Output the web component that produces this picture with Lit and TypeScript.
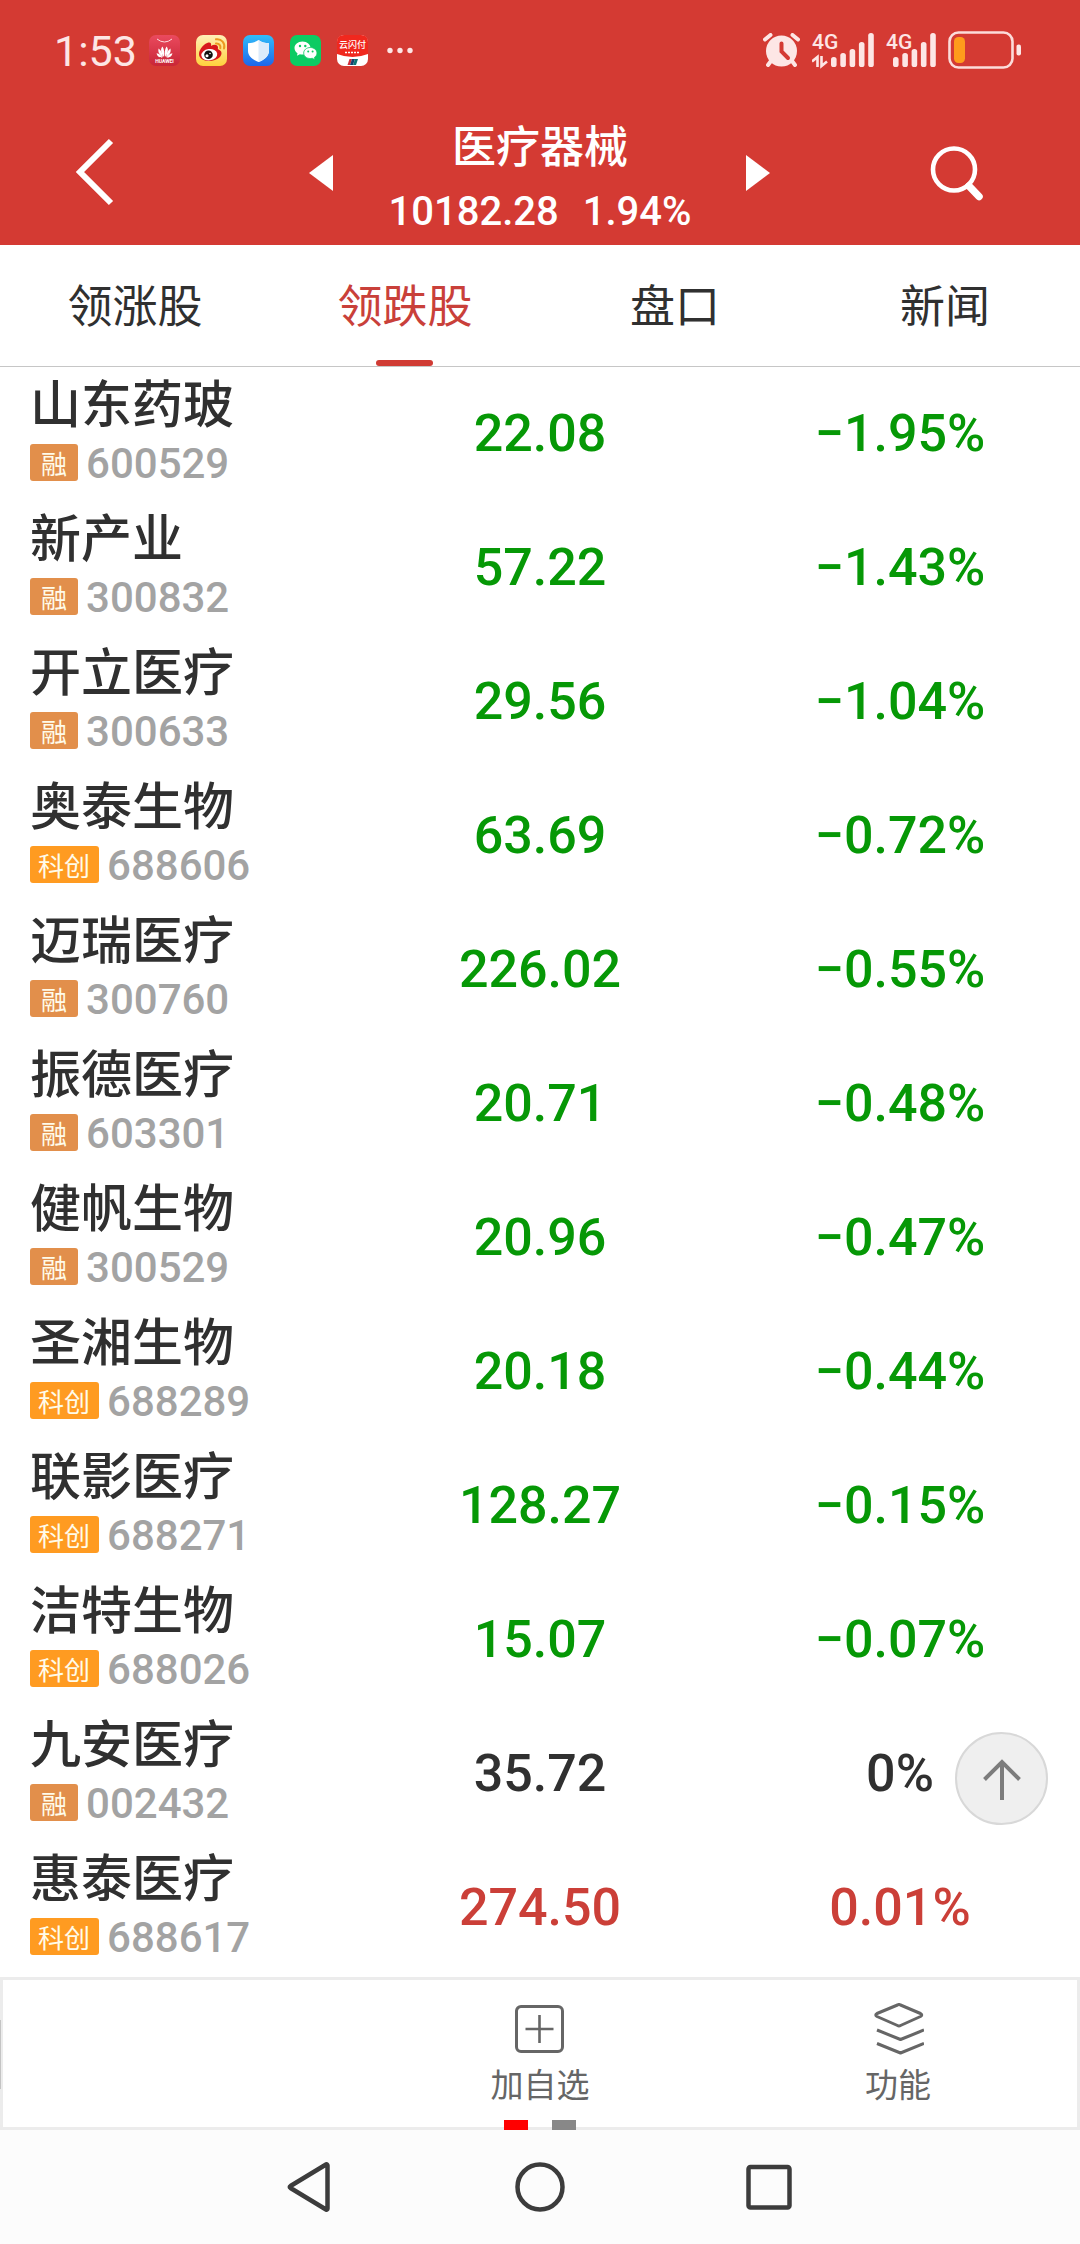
import { LitElement, html, css, svg } from "lit";
import { customElement, property, state } from "lit/decorators.js";
import { classMap } from "lit/directives/class-map.js";

interface Stock {
  name: string;
  board: string;
  code: string;
  price: string;
  change: string;
}

const MARGIN = "融";
const STAR = "科创";

const STOCKS: Stock[] = [
  { name: "山东药玻", board: MARGIN, code: "600529", price: "22.08", change: "-1.95%" },
  { name: "新产业", board: MARGIN, code: "300832", price: "57.22", change: "-1.43%" },
  { name: "开立医疗", board: MARGIN, code: "300633", price: "29.56", change: "-1.04%" },
  { name: "奥泰生物", board: STAR, code: "688606", price: "63.69", change: "-0.72%" },
  { name: "迈瑞医疗", board: MARGIN, code: "300760", price: "226.02", change: "-0.55%" },
  { name: "振德医疗", board: MARGIN, code: "603301", price: "20.71", change: "-0.48%" },
  { name: "健帆生物", board: MARGIN, code: "300529", price: "20.96", change: "-0.47%" },
  { name: "圣湘生物", board: STAR, code: "688289", price: "20.18", change: "-0.44%" },
  { name: "联影医疗", board: STAR, code: "688271", price: "128.27", change: "-0.15%" },
  { name: "洁特生物", board: STAR, code: "688026", price: "15.07", change: "-0.07%" },
  { name: "九安医疗", board: MARGIN, code: "002432", price: "35.72", change: "0%" },
  { name: "惠泰医疗", board: STAR, code: "688617", price: "274.50", change: "0.01%" },
];

const TABS = ["领涨股", "领跌股", "盘口", "新闻"];

const buttonReset = css`
  button {
    margin: 0;
    padding: 0;
    border: 0;
    background: none;
    color: inherit;
    font: inherit;
    cursor: pointer;
  }
  svg {
    display: block;
    flex: none;
  }
`;

@customElement("status-bar")
class StatusBar extends LitElement {
  static styles = css`
    :host {
      display: flex;
      justify-content: space-between;
      align-items: center;
      height: 100px;
      padding: 0 58px 0 54px;
      box-sizing: border-box;
      color: #fde6e5;
    }
    .group {
      display: flex;
      align-items: center;
    }
    .time {
      margin-right: 12px;
      padding-top: 2px;
      font-family: Roboto, sans-serif;
      font-size: 43px;
      line-height: 52px;
    }
    .apps {
      gap: 16px;
    }
    .system {
      gap: 12px;
    }
    svg {
      display: block;
      flex: none;
    }
    .network {
      font: 500 21px Roboto, sans-serif;
    }
    .brand {
      font: 700 5px Roboto, sans-serif;
    }
    .pay {
      font: 500 9px "Noto Sans CJK SC", sans-serif;
    }
  `;

  private bars(x: number) {
    const tops = [24, 20, 16, 9, 0];
    return tops.map(
      (top, i) => svg`<rect x=${x + i * 9.3} y=${top} width="5.6" height=${34 - top} rx="2.6" fill="currentColor"/>`,
    );
  }

  render() {
    return html`
      <div class="group">
        <span class="time">1:53</span>
        <div class="group apps">
          <svg width="31" height="31" viewBox="0 0 31 31" aria-hidden="true">
            <defs>
              <linearGradient id="mall" x2="0" y2="1"><stop stop-color="#ea4a5e" /><stop offset="1" stop-color="#c92637" /></linearGradient>
            </defs>
            <rect width="31" height="31" rx="7" fill="url(#mall)" />
            <path d="M8 4q7.500 6 15 0" fill="none" stroke="#ffd9dc" stroke-width="1" />
            <g fill="#fff">
              <path d="M15 22C12 18 11 14 13.500 11.500C15.300 14 15.500 18 15 22ZM16 22C19 18 20 14 17.500 11.500C15.700 14 15.500 18 16 22Z" />
              <path d="M14 22C10.500 20 8.600 17 9.600 13.500C12.400 15.500 13.600 18.500 14 22ZM17 22C20.500 20 22.400 17 21.400 13.500C18.600 15.500 17.400 18.500 17 22Z" />
              <path d="M13.500 22.700C10.500 22.700 8 21.500 7.600 18.300C10.300 18.600 12.300 20.300 13.500 22.700ZM17.500 22.700C20.500 22.700 23 21.500 23.400 18.300C20.700 18.600 18.700 20.300 17.500 22.700Z" />
            </g>
            <text class="brand" x="15.500" y="28" text-anchor="middle" fill="#fff">HUAWEI</text>
          </svg>
          <svg width="31" height="31" viewBox="0 0 31 31" aria-hidden="true">
            <defs>
              <linearGradient id="blog" x2="0" y2="1"><stop stop-color="#fff0b8" /><stop offset="1" stop-color="#ffd23c" /></linearGradient>
            </defs>
            <rect width="31" height="31" rx="7" fill="url(#blog)" />
            <path d="M3 19C3 14 9 8 12.500 7.500C15 7.200 15.500 9 15 11C18 9 22 9.500 22 12.500C22 13.500 21.500 14 22.500 14.500C26.500 16 26 19.500 24 22C18 28 3 27.500 3 19Z" fill="#d8181c" />
            <ellipse cx="13.300" cy="19.700" rx="8" ry="5.700" fill="#fff" transform="rotate(-8 13.300 19.700)" />
            <circle cx="12.500" cy="19.800" r="4.300" fill="#111" />
            <circle cx="11" cy="20.700" r="1.500" fill="#fff" />
            <circle cx="14" cy="18.500" r=".8" fill="#fff" />
            <path d="M20 8.500C23 8.200 25 10.500 24.300 13.300M20 4.300C25.500 3.500 29.500 8 28 13.500" fill="none" stroke="#ec9a20" stroke-width="2" stroke-linecap="round" />
          </svg>
          <svg width="31" height="31" viewBox="0 0 31 31" aria-hidden="true">
            <defs>
              <linearGradient id="guard" x2="0" y2="1"><stop stop-color="#31bdf9" /><stop offset="1" stop-color="#1f66ea" /></linearGradient>
            </defs>
            <rect width="31" height="31" rx="7" fill="url(#guard)" />
            <path d="M15.500 5C18.500 7.300 22 8 26 8.300V16C26 21 21 25 15.500 27C10 25 5 21 5 16V8.300C9 8 12.500 7.300 15.500 5Z" fill="#fff" />
            <path d="M15.500 5C18.500 7.300 22 8 26 8.300V16C26 21 21 25 15.500 27Z" fill="#dcebfb" />
          </svg>
          <svg width="31" height="31" viewBox="0 0 31 31" aria-hidden="true">
            <rect width="31" height="31" rx="7" fill="#0ccb63" />
            <path d="M12.500 6.500C7.800 6.500 4.500 9.500 4.500 13C4.500 15.200 5.700 17 7.500 18.200L7 20.800L9.900 19.300C15 20.500 20.500 17.500 20.500 13C20.500 9.500 17.200 6.500 12.500 6.500Z" fill="#fff" />
            <path d="M20.300 12.500C16.500 12.500 13.700 15 13.700 18C13.700 22 18 24.300 22.300 23.300L25 24.700L24.400 22.400C26 21.400 27 19.800 27 18C27 15 24.100 12.500 20.300 12.500Z" fill="#fff" stroke="#0ccb63" stroke-width=".8" />
            <g fill="#0ccb63"><circle cx="10" cy="11" r="1.200" /><circle cx="15.300" cy="11" r="1.200" /><circle cx="18.200" cy="16.500" r="1" /><circle cx="22.600" cy="16.500" r="1" /></g>
          </svg>
          <svg width="31" height="31" viewBox="0 0 31 31" aria-hidden="true">
            <rect width="31" height="31" rx="7" fill="#fff" />
            <path d="M0 19V7Q0 0 7 0H24Q31 0 31 7V19Q15.500 25 0 19Z" fill="#f0281e" />
            <text class="pay" x="15.500" y="13" text-anchor="middle" fill="#fff">云闪付</text>
            <path d="M8 17.500H23" stroke="#fff" stroke-width="1.500" stroke-dasharray="2 1" />
            <path d="M12.500 24H15L13 30H10.500Z" fill="#d22f3a" />
            <path d="M15 24H18L16 30H13Z" fill="#17406e" />
            <path d="M18 24H21L19 30H16Z" fill="#0d7374" />
          </svg>
          <svg width="31" height="31" viewBox="0 0 31 31" aria-hidden="true" fill="currentColor">
            <circle cx="6" cy="15.500" r="2.700" /><circle cx="16" cy="15.500" r="2.700" /><circle cx="26" cy="15.500" r="2.700" />
          </svg>
        </div>
      </div>
      <div class="group system">
        <svg width="37" height="34" viewBox="0 0 37 34" aria-hidden="true">
          <circle cx="18.500" cy="18" r="15.500" fill="currentColor" />
          <path d="M2 6.500L7.500 2M35 6.500L29.500 2" stroke="currentColor" stroke-width="4" stroke-linecap="round" />
          <path d="M8 28L5 32M29 28L32 32" stroke="currentColor" stroke-width="4" stroke-linecap="round" />
          <path d="M18.500 10.500V18.500L25 25" fill="none" stroke="#d43a33" stroke-width="4" stroke-linecap="round" />
        </svg>
        <svg width="62" height="46" viewBox="0 -6 62 46" aria-hidden="true">
          <text class="network" x="0" y="16" fill="currentColor">4G</text>
          <path d="M5.500 34V24L0 28.500M9.500 23V33L15 28.500" fill="none" stroke="currentColor" stroke-width="2.600" />
          ${this.bars(19)}
        </svg>
        <svg width="50" height="46" viewBox="0 -6 50 46" aria-hidden="true">
          <text class="network" x="0" y="16" fill="currentColor">4G</text>
          ${this.bars(7)}
        </svg>
        <svg width="74" height="38" viewBox="0 0 74 38" aria-hidden="true">
          <rect x="1.500" y="1.500" width="63" height="35" rx="9" fill="none" stroke="#fcdcda" stroke-width="2.600" />
          <rect x="6" y="6" width="11" height="26" rx="4.500" fill="#ff9b1c" />
          <rect x="68.500" y="13.500" width="4.500" height="11" rx="2" fill="currentColor" />
        </svg>
      </div>
    `;
  }
}

@customElement("board-header")
class BoardHeader extends LitElement {
  static styles = [
    buttonReset,
    css`
      :host {
        display: grid;
        grid-template-columns: 1fr 45% 1fr;
        align-items: center;
        padding: 12px 0 3px;
        color: #fff;
      }
      button {
        margin-bottom: 8px;
      }
      .back {
        justify-self: start;
        margin-left: 62px;
      }
      .search {
        justify-self: end;
        margin-right: 91px;
      }
      .switcher {
        display: flex;
        align-items: center;
        justify-content: space-between;
      }
      .heading {
        text-align: center;
      }
      .title {
        margin: 0;
        font-size: 44px;
        font-weight: 500;
        line-height: 64px;
      }
      .quote {
        display: flex;
        gap: 24px;
        justify-content: center;
        padding-top: 6px;
        font-family: Roboto, sans-serif;
        font-size: 40px;
        font-weight: 500;
        line-height: 60px;
      }
    `,
  ];

  render() {
    return html`
      <button class="back" aria-label="返回">
        <svg width="64" height="72" viewBox="0 0 64 72" fill="none" stroke="#fff" stroke-width="6">
          <path d="M49 4L18 35L49 66" />
        </svg>
      </button>
      <div class="switcher">
        <button aria-label="上一个">
          <svg width="48" height="64" viewBox="0 0 48 64"><path d="M12 32L36 14V50Z" fill="#fff" /></svg>
        </button>
        <div class="heading">
          <h1 class="title">医疗器械</h1>
          <div class="quote"><span>10182.28</span><span>1.94%</span></div>
        </div>
        <button aria-label="下一个">
          <svg width="48" height="64" viewBox="0 0 48 64"><path d="M35 32L11 14V50Z" fill="#fff" /></svg>
        </button>
      </div>
      <button class="search" aria-label="搜索">
        <svg width="64" height="64" viewBox="0 0 64 64" fill="none" stroke="#fff">
          <circle cx="29" cy="28.500" r="21" stroke-width="4.600" />
          <path d="M44 45L54 55.500" stroke-width="7.500" stroke-linecap="round" />
        </svg>
      </button>
    `;
  }
}

@customElement("board-tabs")
class BoardTabs extends LitElement {
  @state() private active = 1;

  static styles = [
    buttonReset,
    css`
      :host {
        display: grid;
        grid-template-columns: repeat(4, 1fr);
        border-bottom: 1px solid #c6c6c6;
        background: #fff;
      }
      button.tab {
        position: relative;
        padding: 29px 0 32px;
        font-size: 45px;
        line-height: 60px;
        color: #303030;
      }
      button.active {
        color: #c9403a;
      }
      .active::after {
        content: "";
        position: absolute;
        left: 50%;
        bottom: 0;
        width: 57px;
        height: 6px;
        margin-left: -29px;
        border-radius: 3px;
        background: #d03b34;
      }
    `,
  ];

  render() {
    return TABS.map(
      (label, i) => html`
        <button
          class=${classMap({ tab: true, active: i === this.active })}
          aria-pressed=${i === this.active}
          @click=${() => (this.active = i)}
        >${label}</button>
      `,
    );
  }
}

@customElement("stock-list")
class StockList extends LitElement {
  @property({ attribute: false }) stocks: Stock[] = [];

  static styles = css`
    :host {
      display: block;
    }
    .stocks {
      width: 100%;
      table-layout: fixed;
      border-collapse: collapse;
      font-family: Roboto, "Noto Sans CJK SC", sans-serif;
    }
    .row {
      height: 134px;
    }
    .stock {
      padding: 9px 0 0 30px;
      text-align: left;
      vertical-align: top;
      font-weight: 400;
    }
    .name {
      font-size: 51px;
      font-weight: 500;
      line-height: 60px;
      white-space: nowrap;
      color: #303030;
    }
    .meta {
      display: flex;
      align-items: center;
      gap: 8px;
      margin-top: 6px;
      font-size: 42px;
      font-weight: 500;
      line-height: 44px;
      color: #a3a3a3;
    }
    .badge {
      margin-bottom: 4px;
      padding: 0 9px 0 8px;
      border-radius: 3px;
      background: #ff9b21;
      font-family: "Noto Sans CJK SC", sans-serif;
      font-size: 26px;
      font-weight: 400;
      line-height: 37px;
      color: #fffbe9;
    }
    .margin {
      padding: 0 11px;
      background: #e28f4b;
    }
    .figure {
      padding: 0;
      text-align: center;
      font-size: 52px;
      font-weight: 500;
      line-height: 60px;
      color: #303030;
    }
    .down {
      color: #069806;
    }
    .up {
      color: #cb3f38;
    }
  `;

  private row(stock: Stock) {
    const value = parseFloat(stock.change);
    const tone = classMap({ figure: true, down: value < 0, up: value > 0 });
    return html`
      <tr class="row">
        <th class="stock" scope="row">
          <div class="name">${stock.name}</div>
          <div class="meta">
            <span class=${classMap({ badge: true, margin: stock.board === MARGIN })}>${stock.board}</span>
            <span>${stock.code}</span>
          </div>
        </th>
        <td class=${tone}>${stock.price}</td>
        <td class=${tone}>${stock.change.replace("-", "\u2212")}</td>
      </tr>
    `;
  }

  render() {
    return html`<table class="stocks"><tbody>${this.stocks.map((s) => this.row(s))}</tbody></table>`;
  }
}

@customElement("action-bar")
class ActionBar extends LitElement {
  static styles = [
    buttonReset,
    css`
      :host {
        position: relative;
        display: grid;
        grid-template-columns: repeat(3, 1fr);
        border: 3px solid #ececec;
        background: #fff;
        color: #666;
      }
      :host::before {
        content: "";
        position: absolute;
        left: -3px;
        top: 40px;
        width: 1px;
        height: 69px;
        background: #c4c4c4;
      }
      button.action {
        display: flex;
        flex-direction: column;
        align-items: center;
        gap: 6px;
        padding: 23px 0 22px;
        font-size: 33px;
        line-height: 44px;
      }
      .add {
        grid-column: 2;
      }
      .pager {
        position: absolute;
        left: 0;
        right: 0;
        bottom: -3px;
        display: flex;
        justify-content: center;
        gap: 24px;
      }
      .page {
        width: 24px;
        height: 10px;
        background: #888;
      }
      .current {
        background: #f00;
      }
    `,
  ];

  render() {
    return html`
      <button class="action add">
        <svg width="52" height="52" viewBox="0 0 52 52" fill="none" stroke="#666" stroke-width="3">
          <rect x="2.500" y="3.500" width="46" height="45" rx="4.500" />
          <path d="M25.500 12V40M11.500 26H39.500" stroke-width="2.600" />
        </svg>
        加自选
      </button>
      <button class="action">
        <svg width="52" height="52" viewBox="0 0 52 52" fill="none" stroke="#666" stroke-width="3" stroke-linejoin="round">
          <path d="M25.500 2Q27 1 28.500 2L48.500 10.500Q51 12 48.500 13.500L28.500 22.500Q27 23.500 25.500 22.500L5 13.500Q2.500 12 5 10.500Z" />
          <path d="M5 27L28.500 36.500L52 27M5 40.500L28.500 50L52 40.500" />
        </svg>
        功能
      </button>
      <div class="pager"><span class="page current"></span><span class="page"></span></div>
    `;
  }
}

@customElement("system-nav")
class SystemNav extends LitElement {
  static styles = [
    buttonReset,
    css`
      :host {
        display: grid;
        grid-template-columns: repeat(3, 1fr);
        justify-items: center;
        padding: 29px 18%;
        background: #fcfcfc;
      }
    `,
  ];

  render() {
    return html`
      <button aria-label="后退">
        <svg width="56" height="56" viewBox="0 0 56 56" fill="none" stroke="#3c3c3c" stroke-width="4.500" stroke-linejoin="round">
          <path d="M45.500 6.500V49.500Q45.500 51 44 50.500L8.500 29Q7 28 8.500 27L44 5.500Q45.500 5 45.500 6.500Z" />
        </svg>
      </button>
      <button aria-label="主页">
        <svg width="56" height="56" viewBox="0 0 56 56" fill="none" stroke="#3c3c3c" stroke-width="4.500">
          <circle cx="28" cy="28" r="22.500" />
        </svg>
      </button>
      <button aria-label="最近任务">
        <svg width="56" height="56" viewBox="0 0 56 56" fill="none" stroke="#3c3c3c" stroke-width="4.500">
          <rect x="6.500" y="8" width="41" height="40.500" rx="2" />
        </svg>
      </button>
    `;
  }
}

@customElement("app-root")
class AppRoot extends LitElement {
  static styles = [
    buttonReset,
    css`
      :host {
        display: flex;
        flex-direction: column;
        min-height: 100vh;
        background: #fff;
        font-family: "Noto Sans CJK SC", "Noto Sans", sans-serif;
      }
      .top {
        background: #d43a33;
      }
      .content {
        position: relative;
        flex: 1;
      }
      button.to-top {
        position: absolute;
        right: 32px;
        bottom: 152px;
        display: grid;
        place-items: center;
        width: 93px;
        height: 93px;
        box-sizing: border-box;
        border: 2px solid #d8d8d8;
        border-radius: 50%;
        background: #efefef;
      }
    `,
  ];

  render() {
    return html`
      <header class="top">
        <status-bar></status-bar>
        <board-header></board-header>
      </header>
      <board-tabs></board-tabs>
      <main class="content">
        <stock-list .stocks=${STOCKS}></stock-list>
        <button class="to-top" aria-label="回到顶部" @click=${() => window.scrollTo({ top: 0 })}>
          <svg width="44" height="44" viewBox="0 0 44 44" fill="none" stroke="#7c7c7c" stroke-width="4">
            <path d="M22 43V5M4.500 22.500L22 5L39.500 22.500" />
          </svg>
        </button>
      </main>
      <action-bar></action-bar>
      <system-nav></system-nav>
    `;
  }
}
